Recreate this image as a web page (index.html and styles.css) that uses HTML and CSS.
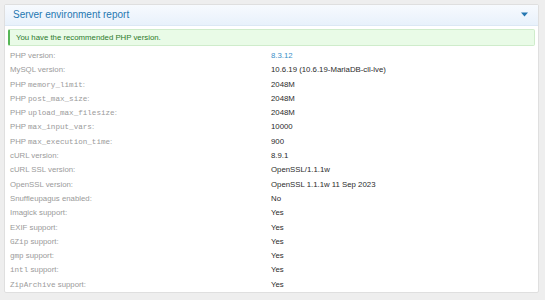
FILE: index.html
```html
<!DOCTYPE html>
<html>
<head>
<meta charset="utf-8">
<link rel="stylesheet" href="styles.css">
</head>
<body>
<div class="block">
  <div class="block-header">
    <span class="block-title">Server environment report</span>
    <svg class="toggle" width="7" height="5" viewBox="0 0 7 5"><path d="M0 0.5 H7 L3.5 4.5 Z" fill="#2577b1"/></svg>
  </div>
  <div class="block-body">
    <div class="success">You have the recommended PHP version.</div>
    <dl class="pairs">
      <dt>PHP version:</dt><dd class="link">8.3.12</dd>
      <dt>MySQL version:</dt><dd>10.6.19 (10.6.19-MariaDB-cll-lve)</dd>
      <dt>PHP <code>memory_limit</code>:</dt><dd>2048M</dd>
      <dt>PHP <code>post_max_size</code>:</dt><dd>2048M</dd>
      <dt>PHP <code>upload_max_filesize</code>:</dt><dd>2048M</dd>
      <dt>PHP <code>max_input_vars</code>:</dt><dd>10000</dd>
      <dt>PHP <code>max_execution_time</code>:</dt><dd>900</dd>
      <dt>cURL version:</dt><dd>8.9.1</dd>
      <dt>cURL SSL version:</dt><dd>OpenSSL/1.1.1w</dd>
      <dt>OpenSSL version:</dt><dd>OpenSSL 1.1.1w 11 Sep 2023</dd>
      <dt>Snuffleupagus enabled:</dt><dd>No</dd>
      <dt>Imagick support:</dt><dd>Yes</dd>
      <dt>EXIF support:</dt><dd>Yes</dd>
      <dt><code>GZip</code> support:</dt><dd>Yes</dd>
      <dt><code>gmp</code> support:</dt><dd>Yes</dd>
      <dt><code>intl</code> support:</dt><dd>Yes</dd>
      <dt><code>ZipArchive</code> support:</dt><dd>Yes</dd>
    </dl>
  </div>
</div>
</body>
</html>
```
FILE: styles.css
```css
html, body {
  margin: 0;
  padding: 0;
}
body {
  background: #eeeeee;
  font-family: "Liberation Sans", Arial, sans-serif;
  padding: 4px 6px 6px 4px;
}
.block {
  background: #fff;
  border: 1px solid #dfdfdf;
  border-radius: 2px;
}
.block-header {
  box-sizing: border-box;
  height: 21px;
  display: flex;
  align-items: center;
  justify-content: space-between;
  padding: 0 10px 1px 8px;
  background: linear-gradient(to bottom, #f7fafe, #e8f1fb);
  border-bottom: 1px solid #dce8f4;
}
.block-title {
  font-size: 10px;
  color: #2577b1;
}
.toggle {
  display: block;
}
.block-body {
  padding: 3px 3px 0 3px;
}
.success {
  box-sizing: border-box;
  height: 17px;
  line-height: 15px;
  background: #e9fbe7;
  border: 1px solid #cfeccb;
  border-left: 2px solid #57b657;
  color: #2c7a2c;
  font-size: 7.8px;
  padding: 0 6px;
  border-radius: 2px;
}
.pairs {
  margin: 3px 0 0 0;
  display: grid;
  grid-template-columns: 263px 1fr;
  font-size: 7.8px;
}
.pairs dt, .pairs dd {
  margin: 0;
  height: 14.3px;
  line-height: 14.3px;
  white-space: nowrap;
}
.pairs dt {
  color: #9a9a9a;
  padding-left: 2px;
}
.pairs dd {
  color: #2b2b2b;
}
.pairs dd.link {
  color: #3b8fc8;
}
code {
  font-family: "Liberation Mono", "DejaVu Sans Mono", monospace;
  font-size: 7.6px;
}
```
